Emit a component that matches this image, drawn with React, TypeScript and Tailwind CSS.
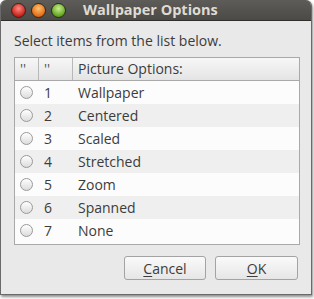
import React from "react";

const options = ["Wallpaper", "Centered", "Scaled", "Stretched", "Zoom", "Spanned", "None"];

function Light({ from, to }: { from: string; to: string }) {
	return (
		<span
			className="block w-[15px] h-[15px] rounded-full border border-[#2a2926]"
			style={{ background: `radial-gradient(circle at 50% 35%, ${from} 0%, ${to} 75%)` }}
		/>
	);
}

function Radio() {
	return (
		<span className="block w-[13px] h-[13px] rounded-full border border-[#9a9a9a] bg-gradient-to-b from-[#ffffff] to-[#dcdcdc]" />
	);
}

export default function App() {
	return (
		<div className="w-[314px] h-[299px] bg-white font-['Open_Sans',sans-serif] text-[#3c3c3c]">
			<div className="w-[312px] h-[295px] flex flex-col rounded-t-[6px] overflow-hidden bg-[#e9e9e9] border-l border-r border-b border-[#6a6a6a] shadow-[1px_2px_3px_rgba(0,0,0,0.45)]">
				<div className="h-[21px] shrink-0 flex items-center bg-gradient-to-b from-[#5d5c58] to-[#4b4a46] border-b border-[#2f2e2b]">
					<div className="flex items-center gap-[5px] pl-[10px]">
						<Light from="#ff8a80" to="#c31a12" />
						<Light from="#ffc070" to="#e0670f" />
						<Light from="#c8ef8a" to="#5a9e1a" />
					</div>
					<span className="ml-[17px] text-[14.5px] font-bold text-[#dfdbd2] leading-none">Wallpaper Options</span>
				</div>

				<div className="flex-1 flex flex-col px-[13px] pt-[11px]">
					<p className="text-[14px] leading-[17px]">Select items from the list below.</p>

					<div className="mt-[8px] w-[286px] h-[188px] border border-[#a9a9a9] bg-[#fcfcfc] text-[14px]">
						<div className="h-[23px] flex bg-gradient-to-b from-[#f7f7f7] to-[#e4e4e4] border-b border-[#a9a9a9]">
							<div className="w-[24px] border-r border-[#b8b8b8] pl-[5px] leading-[22px] text-[#555]">''</div>
							<div className="w-[34px] border-r border-[#b8b8b8] pl-[5px] leading-[22px] text-[#555]">''</div>
							<div className="pl-[5px] leading-[22px]">Picture Options:</div>
						</div>
						{options.map((label, i) => (
							<div
								key={label}
								className={`h-[23px] flex items-center ${i % 2 === 1 ? "bg-[#efefef]" : "bg-[#fcfcfc]"}`}
							>
								<div className="w-[24px] pl-[5px]">
									<Radio />
								</div>
								<div className="w-[34px] pl-[5px]">{i + 1}</div>
								<div className="pl-[5px]">{label}</div>
							</div>
						))}
					</div>

					<div className="mt-[11px] flex justify-end gap-[9px] text-[14px]">
						<button className="w-[82px] h-[24px] rounded-[3px] border border-[#a3a3a3] bg-gradient-to-b from-[#fafafa] to-[#e6e6e6]">
							<span className="underline underline-offset-2">C</span>ancel
						</button>
						<button className="w-[83px] h-[24px] rounded-[3px] border border-[#a3a3a3] bg-gradient-to-b from-[#fafafa] to-[#e6e6e6]">
							<span className="underline underline-offset-2">O</span>K
						</button>
					</div>
				</div>
			</div>
		</div>
	);
}
